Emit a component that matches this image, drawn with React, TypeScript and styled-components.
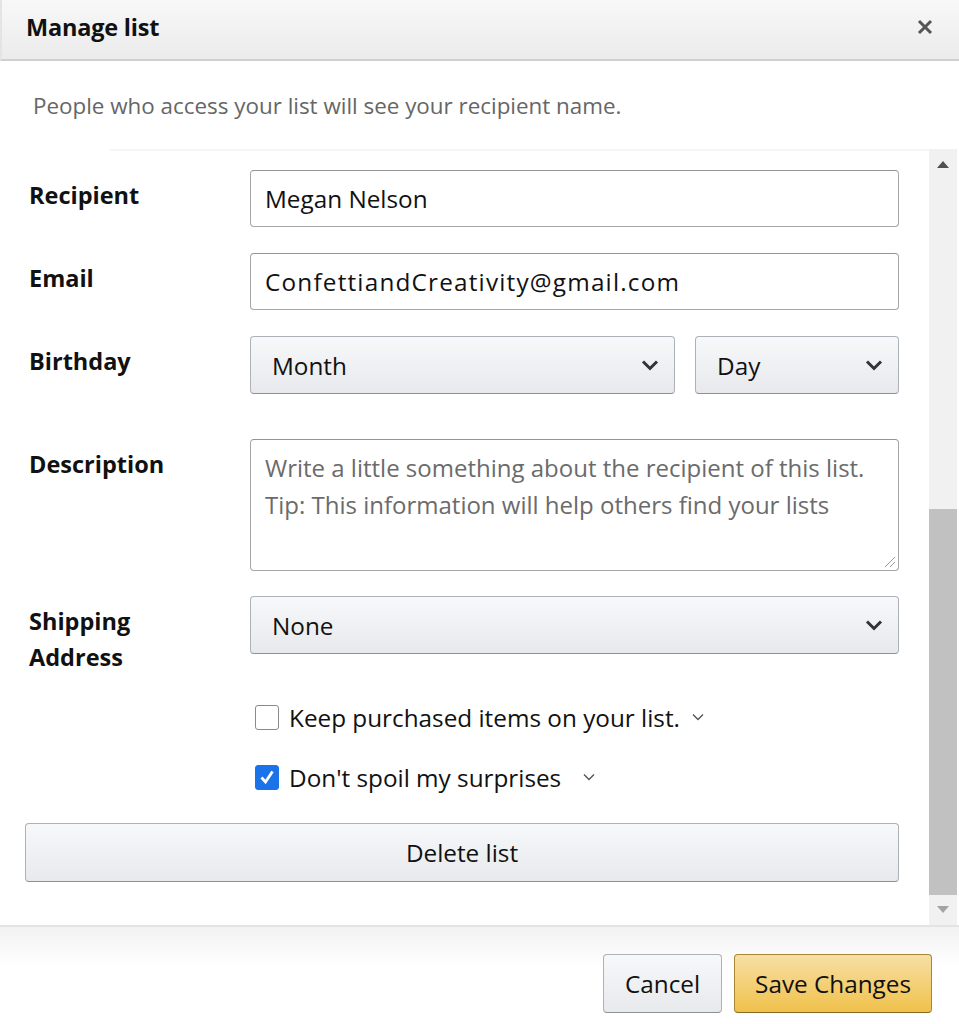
import React from "react";
import styled, { createGlobalStyle } from "styled-components";

const Global = createGlobalStyle`
  html, body { margin: 0; padding: 0; background: #fff; }
  body { font-family: "Open Sans", "Noto Sans", Arial, sans-serif; color: #111; }
  * { box-sizing: border-box; }
`;

const Modal = styled.div`
  width: 959px;
  height: 1024px;
  display: flex;
  flex-direction: column;
  background: #fff;
  overflow: hidden;
`;

const Header = styled.div`
  height: 61px;
  flex: none;
  display: flex;
  align-items: center;
  justify-content: space-between;
  padding: 0 26px 5px 24px;
  background: linear-gradient(#f8f8f8, #ebebeb);
  border-bottom: 2px solid #cfcfcf;
  border-left: 2px solid #e4e4e4;
`;

const Title = styled.h1`
  margin: 0;
  font-size: 23.5px;
  font-weight: 700;
  color: #111;
  letter-spacing: -0.2px;
`;

const Intro = styled.p`
  margin: 0;
  padding: 32px 0 30px 33px;
  font-size: 22.4px;
  color: #666;
  line-height: 26px;
`;

const Body = styled.div`
  flex: 1;
  display: flex;
  min-height: 0;
`;

const Content = styled.div`
  flex: 1;
  padding: 19px 30px 0 25px;
  display: flex;
  flex-direction: column;
  border-top: 2px solid #f5f5f5;
  margin-left: 110px;
`;

const Inner = styled.div`
  margin-left: -110px;
  display: flex;
  flex-direction: column;
`;

const Row = styled.div<{ $gap?: number }>`
  display: grid;
  grid-template-columns: 225px 1fr;
  align-items: start;
  margin-bottom: ${(p) => p.$gap ?? 26}px;
`;

const Label = styled.label`
  padding: 7px 0 0 4px;
  font-size: 23.5px;
  font-weight: 700;
  line-height: 36px;
  color: #111;
`;

const Input = styled.div<{ $wide?: boolean }>`
  height: 57px;
  border: 1.5px solid #a6a6a6;
  border-top-color: #949494;
  border-radius: 4px;
  padding: 0 14px;
  display: flex;
  align-items: center;
  font-size: 24.3px;
  letter-spacing: ${(p) => (p.$wide ? 1.2 : 0)}px;
  color: #111;
  background: #fff;
`;

const TextArea = styled.div`
  position: relative;
  height: 132px;
  border: 1.5px solid #a6a6a6;
  border-top-color: #949494;
  border-radius: 4px;
  padding: 9px 14px;
  font-size: 24px;
  line-height: 37px;
  color: #6b6b6b;
  white-space: nowrap;
`;

const Grip = styled.svg`
  position: absolute;
  right: 2px;
  bottom: 2px;
`;

const SelectPair = styled.div`
  display: grid;
  grid-template-columns: 1fr 204px;
  gap: 20px;
`;

const Select = styled.div`
  height: 58px;
  border: 1.5px solid #adb1b8;
  border-bottom-color: #8d9096;
  border-radius: 4px;
  background: linear-gradient(#f7f8fa, #e7e9ec);
  display: flex;
  align-items: center;
  justify-content: space-between;
  padding: 0 15px 0 21px;
  font-size: 24.3px;
  color: #111;
`;

const CheckRow = styled.div<{ $mt: number }>`
  display: flex;
  align-items: center;
  gap: 10px;
  margin: ${(p) => p.$mt}px 0 0 230px;
  font-size: 24.3px;
  color: #111;
  height: 36px;
`;

const Box = styled.span<{ $checked?: boolean }>`
  width: 24px;
  height: 25px;
  flex: none;
  border-radius: 3px;
  border: 1.5px solid ${(p) => (p.$checked ? "#1a73e8" : "#8a8a8a")};
  background: ${(p) => (p.$checked ? "#1a73e8" : "#fff")};
  display: flex;
  align-items: center;
  justify-content: center;
`;

const Caret = styled.svg<{ $ml: number }>`
  margin-left: ${(p) => p.$ml}px;
`;

const DeleteButton = styled.div`
  margin-top: 28px;
  height: 59px;
  border: 1.5px solid #adb1b8;
  border-bottom-color: #8d9096;
  border-radius: 4px;
  background: linear-gradient(#f7f8fa, #e7e9ec);
  display: flex;
  align-items: center;
  justify-content: center;
  font-size: 24.3px;
  color: #111;
`;

const Scrollbar = styled.div`
  width: 28px;
  margin-right: 2px;
  background: #f1f1f1;
  display: flex;
  flex-direction: column;
  align-items: stretch;
`;

const Arrow = styled.div`
  height: 30px;
  display: flex;
  align-items: center;
  justify-content: center;
  flex: none;
`;

const Track = styled.div`
  flex: 1;
  display: flex;
  flex-direction: column;
  justify-content: flex-end;
`;

const Thumb = styled.div`
  height: 386px;
  background: #c1c1c1;
`;

const Footer = styled.div`
  height: 99px;
  flex: none;
  border-top: 2px solid #e3e3e3;
  background: linear-gradient(#f2f2f2, #fff 40%);
  display: flex;
  justify-content: flex-end;
  align-items: flex-start;
  gap: 12px;
  padding: 27px 27px 0 0;
`;

const Button = styled.div<{ $primary?: boolean }>`
  height: 59px;
  padding: 0 ${(p) => (p.$primary ? 20 : 21)}px;
  border-radius: 4px;
  border: 1.5px solid ${(p) => (p.$primary ? "#a88734" : "#adb1b8")};
  border-bottom-color: ${(p) => (p.$primary ? "#846a29" : "#8d9096")};
  background: ${(p) =>
    p.$primary
      ? "linear-gradient(#f7dfa5, #f0c14b)"
      : "linear-gradient(#f7f8fa, #e7e9ec)"};
  display: flex;
  align-items: center;
  font-size: 24.3px;
  color: #111;
`;

const CloseIcon = () => (
  <svg width="16" height="16" viewBox="0 0 16 16">
    <path d="M2 2 L14 14 M14 2 L2 14" stroke="#555" strokeWidth="3" />
  </svg>
);

const Chevron = () => (
  <svg width="18" height="12" viewBox="0 0 18 12">
    <path d="M2 2.5 L9 9.5 L16 2.5" fill="none" stroke="#333" strokeWidth="3" />
  </svg>
);

const SmallCaret = ({ ml }: { ml: number }) => (
  <Caret $ml={ml} width="12" height="8" viewBox="0 0 12 8">
    <path d="M1 1.5 L6 6.5 L11 1.5" fill="none" stroke="#555" strokeWidth="1.4" />
  </Caret>
);

export default function App() {
  return (
    <>
      <Global />
      <Modal>
        <Header>
          <Title>Manage list</Title>
          <CloseIcon />
        </Header>
        <Intro>People who access your list will see your recipient name.</Intro>
        <Body>
          <Content>
            <Inner>
              <Row>
                <Label>Recipient</Label>
                <Input>Megan Nelson</Input>
              </Row>
              <Row>
                <Label>Email</Label>
                <Input $wide>ConfettiandCreativity@gmail.com</Input>
              </Row>
              <Row $gap={45}>
                <Label>Birthday</Label>
                <SelectPair>
                  <Select>
                    Month
                    <Chevron />
                  </Select>
                  <Select>
                    Day
                    <Chevron />
                  </Select>
                </SelectPair>
              </Row>
              <Row $gap={25}>
                <Label>Description</Label>
                <TextArea>
                  Write a little something about the recipient of this list.
                  <br />
                  Tip: This information will help others find your lists
                  <Grip width="14" height="14" viewBox="0 0 14 14">
                    <path d="M13 3 L3 13 M13 8 L8 13" stroke="#999" strokeWidth="1" />
                  </Grip>
                </TextArea>
              </Row>
              <Row $gap={0}>
                <Label>
                  Shipping
                  <br />
                  Address
                </Label>
                <Select>
                  None
                  <Chevron />
                </Select>
              </Row>
              <CheckRow $mt={24}>
                <Box />
                <span>Keep purchased items on your list.</span>
                <SmallCaret ml={2} />
              </CheckRow>
              <CheckRow $mt={24}>
                <Box $checked>
                  <svg width="18" height="18" viewBox="0 0 18 18">
                    <path d="M3.5 9.5 L7.5 14 L14.5 3.5" fill="none" stroke="#fff" strokeWidth="2.8" />
                  </svg>
                </Box>
                <span>Don't spoil my surprises</span>
                <SmallCaret ml={12} />
              </CheckRow>
              <DeleteButton>Delete list</DeleteButton>
            </Inner>
          </Content>
          <Scrollbar>
            <Arrow>
              <svg width="12" height="8" viewBox="0 0 12 8">
                <path d="M0 8 L6 1 L12 8 Z" fill="#505050" />
              </svg>
            </Arrow>
            <Track>
              <Thumb />
            </Track>
            <Arrow>
              <svg width="12" height="8" viewBox="0 0 12 8">
                <path d="M0 0 L6 7 L12 0 Z" fill="#a3a3a3" />
              </svg>
            </Arrow>
          </Scrollbar>
        </Body>
        <Footer>
          <Button>Cancel</Button>
          <Button $primary>Save Changes</Button>
        </Footer>
      </Modal>
    </>
  );
}
